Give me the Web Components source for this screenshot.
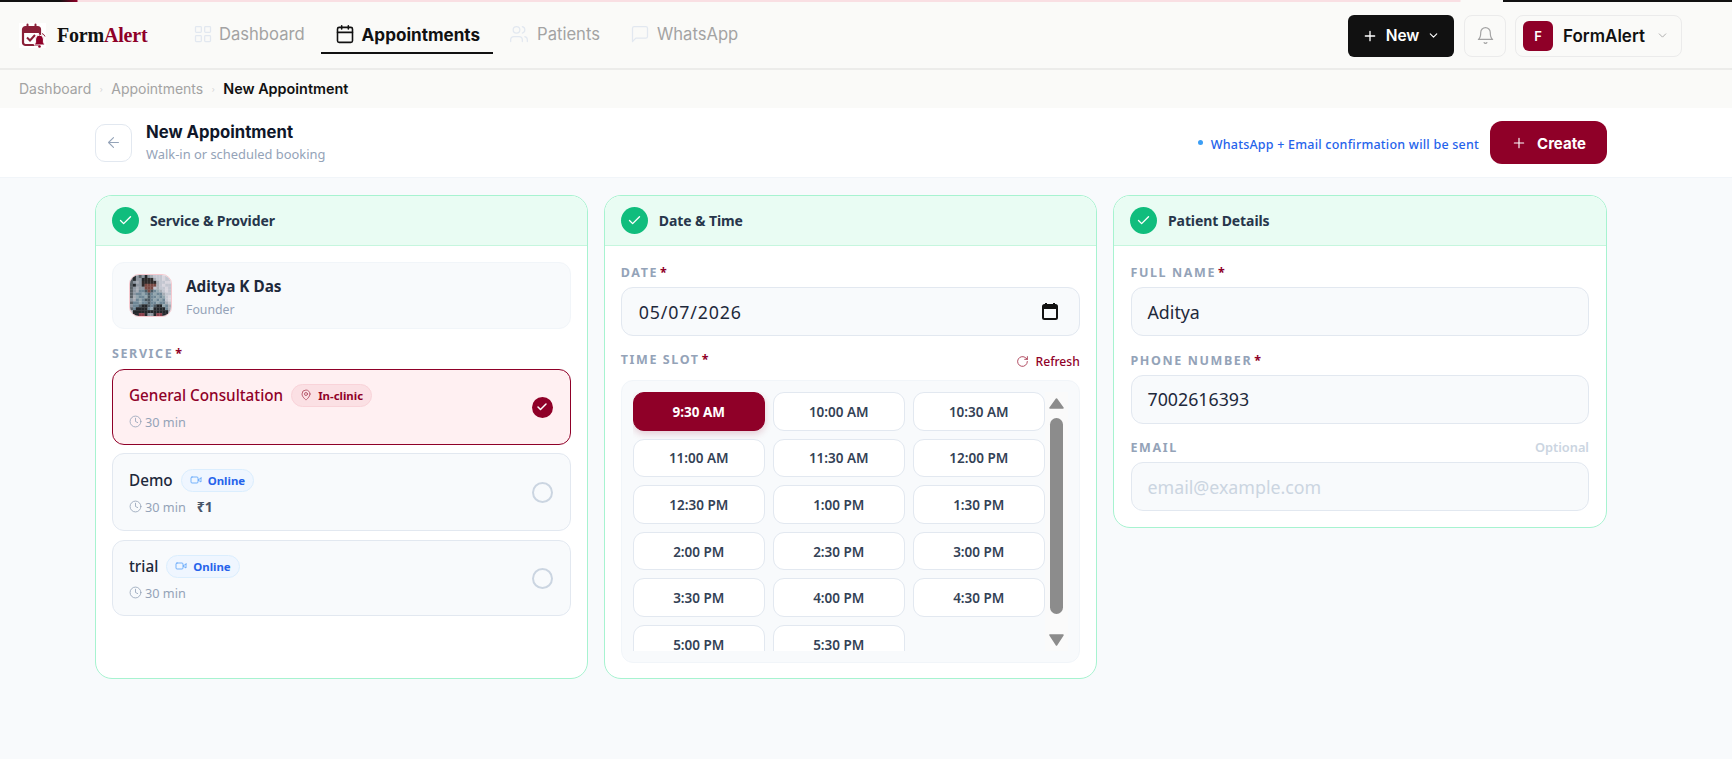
<!DOCTYPE html>
<html lang="en">
<head>
<meta charset="utf-8">
<title>New Appointment</title>
<style>
  html, body { margin: 0; padding: 0; background: #f8fafc; font-family: "Noto Sans", sans-serif; }
  body { height: 759px; overflow: hidden; }
</style>
</head>
<body>
<app-shell>
  <top-bar></top-bar>
  <bread-crumbs></bread-crumbs>
  <page-head></page-head>
  <div slot="cards">
    <step-card heading="Service &amp; Provider" style="height:484px">
      <provider-box name="Aditya K Das" role="Founder"></provider-box>
      <field-label text="Service" required style="margin-top:17px;margin-bottom:7px"></field-label>
      <service-option title="General Consultation" mode="clinic" selected></service-option>
      <service-option title="Demo" mode="online" price="₹1" style="margin-top:8px;height:78px"></service-option>
      <service-option title="trial" mode="online" style="margin-top:9px;height:76px"></service-option>
    </step-card>
    <step-card heading="Date &amp; Time" style="height:484px">
      <form-field label="Date" required value="05/07/2026" spaced calendar style="margin-top:3px"></form-field>
      <div class="slot-head">
        <field-label text="Time Slot" required></field-label>
        <refresh-link></refresh-link>
      </div>
      <time-slots></time-slots>
    </step-card>
    <step-card heading="Patient Details" style="height:333px">
      <form-field label="Full Name" required value="Aditya" style="margin:3px 1px 0 .5px"></form-field>
      <form-field label="Phone Number" required value="7002616393" style="margin:16.5px 1px 0 .5px"></form-field>
      <form-field label="Email" optional placeholder="email@example.com" style="margin:14.5px 1px 0 .5px"></form-field>
    </step-card>
  </div>
</app-shell>

<script>
const svg = (size, body, sw = 2, extra = '') =>
  `<svg width="${size}" height="${size}" viewBox="0 0 24 24" fill="none" stroke="currentColor" stroke-width="${sw}" stroke-linecap="round" stroke-linejoin="round" ${extra}>${body}</svg>`;

const ICONS = {
  grid: '<rect x="3" y="3" width="7" height="7" rx="1"/><rect x="14" y="3" width="7" height="7" rx="1"/><rect x="14" y="14" width="7" height="7" rx="1"/><rect x="3" y="14" width="7" height="7" rx="1"/>',
  calendar: '<path d="M8 2v4M16 2v4"/><rect x="3" y="4" width="18" height="18" rx="2"/><path d="M3 10h18"/>',
  users: '<path d="M16 21v-2a4 4 0 0 0-4-4H6a4 4 0 0 0-4 4v2"/><circle cx="9" cy="7" r="4"/><path d="M22 21v-2a4 4 0 0 0-3-3.87M16 3.13a4 4 0 0 1 0 7.75"/>',
  chat: '<path d="M21 15a2 2 0 0 1-2 2H7l-4 4V5a2 2 0 0 1 2-2h14a2 2 0 0 1 2 2z"/>',
  plus: '<path d="M5 12h14M12 5v14"/>',
  down: '<path d="m6 9 6 6 6-6"/>',
  bell: '<path d="M6 8a6 6 0 0 1 12 0c0 7 3 9 3 9H3s3-2 3-9"/><path d="M10.3 21a1.94 1.94 0 0 0 3.4 0"/>',
  back: '<path d="m12 19-7-7 7-7M19 12H5"/>',
  check: '<path d="M20 6 9 17l-5-5"/>',
  clock: '<circle cx="12" cy="12" r="10"/><path d="M12 6v6l4 2"/>',
  pin: '<path d="M20 10c0 6-8 12-8 12s-8-6-8-12a8 8 0 0 1 16 0Z"/><circle cx="12" cy="10" r="3"/>',
  video: '<path d="m22 8-6 4 6 4V8Z"/><rect x="2" y="6" width="14" height="12" rx="2"/>',
  refresh: '<path d="M21 12a9 9 0 1 1-2.64-6.36L21 8"/><path d="M21 3v5h-5"/>'
};

// the provider photo, as a small mosaic
const PHOTO = [
  'akbabkbgcccdcd',
  'akbbkhhhgccdcc',
  'abgbhhhhhgccdd',
  'akbbhffffgcdcc',
  'abgbbfffcgccdc',
  'abgjjnfnjmgcdc',
  'abjjmjnjmjjgcc',
  'agmjjmnjjmjmcd',
  'bgjmjnnjmjmjcd',
  'ajjmjjnjjmjjgc',
  'bjjnkknjnkkmjg',
  'ajkkkkjmkkkkjg',
  'gkkkkkkkkkkkkb',
  'bkkrrkbbkrrkkg'
];
const PHOTO_COLORS = { a: '#5b6268', b: '#8d96a0', c: '#c3c6d0', d: '#d9d6de', k: '#24272b', h: '#2e2a2a', f: '#7a4a44', j: '#6f8796', m: '#93a6ae', n: '#4c5a63', r: '#8a3f4a', g: '#a8adb5' };

class Base extends HTMLElement {
  constructor() {
    super();
    this.attachShadow({ mode: 'open' });
  }
  connectedCallback() {
    this.shadowRoot.innerHTML = this.render();
  }
}

class AppShell extends Base {
  render() {
    return `<style>
      :host { display: block; width: 1732px; height: 759px; background: #f8fafc; color: #1e293b; }
      .cards { display: grid; grid-template-columns: 492.5px 493px 494px; column-gap: 16.25px; align-items: start; padding: 17px 0 0 95px; }
      ::slotted([slot="cards"]) { display: contents; }
    </style>
    <slot></slot>
    <div class="cards"><slot name="cards"></slot></div>`;
  }
}

class TopBar extends Base {
  render() {
    const tab = (icon, label, cls = '') => `<a class="tab ${cls}">${svg(20, ICONS[icon], cls === 'on' ? 1.9 : 1.5)}<span>${label}</span></a>`;
    return `<style>
      :host { display: flex; position: relative; align-items: center; box-sizing: border-box; height: 70px; padding: 0 50px 0 19px; background: #fafaf8; border-bottom: 2px solid #ececea; font-family: Inter, "Noto Sans", sans-serif; }
      .load { position: absolute; left: 0; right: 0; top: 0; height: 2px; background: linear-gradient(90deg, #111 0 60px, #8f0028 77px, #f9dfe3 78px, #f9dfe3 1460px, #fafaf8 1461px, #fafaf8 1503px, #111 1503px); }
      .logo { display: flex; align-items: center; gap: 11px; width: 159px; margin-top: 3px; }
      .logo b { font: 700 20px "Liberation Serif", serif; color: #111; letter-spacing: -.2px; }
      .logo b i { font-style: normal; color: #8f0028; }
      nav { display: flex; align-items: stretch; height: 40px; }
      .tab { display: flex; align-items: center; gap: 6.500px; padding: 2px 16px 0 14.500px; font-size: 16.600px; color: #a3a3a3; border-bottom: 2px solid transparent; }
      .tab svg { color: #e2e8f0; }
      .tab.on { color: #111; font-size: 17.100px; font-weight: 700; border-bottom-color: #111; padding-right: 13px; }
      .tab.on svg { color: #111; }
      .tab.wide { padding-left: 16px; gap: 8px; }
      .right { margin-left: auto; display: flex; align-items: center; gap: 9px; margin-top: 3px; }
      .new { display: flex; align-items: center; justify-content: center; gap: 8px; box-sizing: border-box; width: 106px; height: 42px; background: #111; color: #fff; border-radius: 6px; font-size: 15.500px; font-weight: 600; margin-right: 1px; }
      .bell { display: flex; align-items: center; justify-content: center; box-sizing: border-box; width: 42px; height: 42px; border: 1px solid #ebebeb; border-radius: 8px; color: #a3a3a3; }
      .user { display: flex; align-items: center; box-sizing: border-box; width: 167px; height: 42px; border: 1px solid #ebebeb; border-radius: 8px; padding-left: 7px; font-size: 17px; font-weight: 600; color: #111; }
      .av { display: flex; align-items: center; justify-content: center; width: 30px; height: 30px; margin-right: 10px; background: #8f0028; color: #fff; border-radius: 6px; font-size: 13px; font-weight: 600; }
      .user svg { margin-left: 11px; color: #a3a3a3; }
    </style>
    <div class="load"></div>
    <div class="logo">
      <svg width="27" height="25" viewBox="0 0 27 25" style="background:#fff">
        <rect x="4" y="4" width="17" height="18" rx="2.500" fill="none" stroke="#8a2038" stroke-width="2.200"/>
        <path d="M4 5h17v5H4z" fill="#8a2038"/>
        <path d="M8.500 1.500v4M16.500 1.500v4" stroke="#8a2038" stroke-width="2" stroke-linecap="round"/>
        <path d="m8 14.500 3 3 5-5.500" fill="none" stroke="#8a2038" stroke-width="2"/>
        <path d="M15 22h11l-1.600-2.500v-3.500a3.900 3.900 0 0 0-7.800 0v3.500z" fill="#8f0028" stroke="#fff" stroke-width="1"/>
        <path d="M23 10.500a5 5 0 0 1 3 3" fill="none" stroke="#8a2038" stroke-width="1"/>
        <circle cx="20.500" cy="23.500" r="1.300" fill="#8f0028"/>
      </svg>
      <b>Form<i>Alert</i></b>
    </div>
    <nav>${tab('grid', 'Dashboard')}${tab('calendar', 'Appointments', 'on')}${tab('users', 'Patients', 'wide')}${tab('chat', 'WhatsApp')}</nav>
    <div class="right">
      <div class="new">${svg(16, ICONS.plus)}<span>New</span>${svg(13, ICONS.down)}</div>
      <div class="bell">${svg(19, ICONS.bell, 1.5)}</div>
      <div class="user"><span class="av">F</span><span>FormAlert</span>${svg(13, ICONS.down, 1.6)}</div>
    </div>`;
  }
}

class BreadCrumbs extends Base {
  render() {
    return `<style>
      :host { display: flex; align-items: center; box-sizing: border-box; height: 38px; padding: 0 19px 1px; background: #fafaf8; font: 14px Inter, sans-serif; color: #a3a3a3; }
      i { font-style: normal; width: 20px; text-align: center; font-size: 8px; color: #d4d4d4; }
      b { font-size: 14.400px; font-weight: 600; color: #111; }
    </style>
    <span>Dashboard</span><i>›</i><span>Appointments</span><i>›</i><b>New Appointment</b>`;
  }
}

class PageHead extends Base {
  render() {
    return `<style>
      :host { display: flex; align-items: center; box-sizing: border-box; height: 70px; padding: 0 125px 0 95px; background: #fff; border-bottom: 1px solid #f1f5f9; }
      .back { display: flex; align-items: center; justify-content: center; box-sizing: border-box; width: 37px; height: 38px; margin-right: 14px; border: 1px solid #e2e8f0; border-radius: 10px; color: #94a3b8; }
      h1 { margin: 0; font: 700 16.700px/22px Inter, sans-serif; color: #0f172a; }
      p { margin: 1px 0 0; font-size: 12.900px; line-height: 20px; color: #94a3b8; }
      .info { display: flex; align-items: center; margin-left: auto; padding-top: 3px; font-size: 12.500px; font-weight: 500; color: #2563eb; letter-spacing: .22px; }
      .info::before { content: ""; width: 5px; height: 5px; margin: -3px 8px 0 0; border-radius: 50%; background: #3b9ef5; }
      .create { display: flex; align-items: center; justify-content: center; gap: 10px; box-sizing: border-box; width: 117px; height: 43px; margin-left: 11px; padding-top: 1px; background: #8f0028; color: #fff; border-radius: 12px; font: 700 15px Inter, sans-serif; }
    </style>
    <div class="back">${svg(17, ICONS.back, 1.5)}</div>
    <div><h1>New Appointment</h1><p>Walk-in or scheduled booking</p></div>
    <div class="info">WhatsApp + Email confirmation will be sent</div>
    <div class="create">${svg(16, ICONS.plus, 1.7)}<span>Create</span></div>`;
  }
}

class StepCard extends Base {
  render() {
    return `<style>
      :host { display: block; box-sizing: border-box; background: #fff; border: 1px solid #a7f3d0; border-radius: 17px; overflow: hidden; }
      header { display: flex; align-items: center; gap: 11px; box-sizing: border-box; height: 50px; padding: 0 16px; background: #e9fcf3; border-bottom: 1px solid #c6f6de; }
      .tick { display: flex; align-items: center; justify-content: center; width: 27px; height: 27px; border-radius: 50%; background: #10bd7d; color: #fff; }
      h2 { margin: 0; font-size: 14px; font-weight: 700; color: #27364b; letter-spacing: -.1px; }
      .body { padding: 16px; }
      ::slotted(.slot-head) { display: flex; justify-content: space-between; align-items: flex-end; margin: 16px 0 12px; }
    </style>
    <header><span class="tick">${svg(15, ICONS.check, 2.2)}</span><h2>${this.getAttribute('heading')}</h2></header>
    <div class="body"><slot></slot></div>`;
  }
}

class ProviderBox extends Base {
  render() {
    const cells = PHOTO.map((row, y) => [...row].map((c, x) =>
      `<rect x="${x * 3}" y="${y * 3}" width="3.200" height="3.200" fill="${PHOTO_COLORS[c]}"/>`).join('')).join('');
    return `<style>
      :host { display: flex; align-items: center; box-sizing: border-box; height: 67px; padding: 0 16px; gap: 14px; background: #f8fafc; border: 1px solid #f1f5f9; border-radius: 12px; }
      .ph { width: 43px; height: 43px; border-radius: 10px; box-sizing: border-box; border: 1px solid #f6c9cf; overflow: hidden; flex: none; }
      .ph svg { display: block; }
      .who { padding-top: 4px; }
      b { display: block; font-size: 15.300px; font-weight: 700; color: #1e293b; line-height: 20px; }
      span { display: block; margin-top: 5px; font-size: 12.300px; color: #94a3b8; line-height: 18px; }
    </style>
    <div class="ph"><svg width="41" height="41" viewBox="0 0 42 42">${cells}</svg></div>
    <div class="who"><b>${this.getAttribute('name')}</b><span>${this.getAttribute('role')}</span></div>`;
  }
}

class FieldLabel extends Base {
  render() {
    return `<style>
      :host { display: block; font-size: 12.500px; line-height: 16px; font-weight: 700; letter-spacing: 1.600px; color: #94a3b8; text-transform: uppercase; }
      i { font-style: normal; color: #8f0028; letter-spacing: 0; margin-left: 2px; }
    </style>${this.getAttribute('text')}${this.hasAttribute('required') ? '<i>*</i>' : ''}`;
  }
}

class FormField extends Base {
  render() {
    const val = this.getAttribute('value');
    const ph = this.getAttribute('placeholder');
    return `<style>
      :host { display: block; }
      .top { display: flex; justify-content: space-between; align-items: baseline; margin-bottom: 6px; }
      .opt { font-size: 12.800px; font-weight: 600; color: #cbd5e1; }
      .box { display: flex; align-items: center; justify-content: space-between; box-sizing: border-box; height: 49px; padding: 0 16px; background: #f8fafc; border: 1px solid #e2e8f0; border-radius: 12px; font-size: 17.800px; color: #1e293b; }
      .spaced { letter-spacing: .85px; margin-left: 1px; }
      .ph { color: #cbd5e1; }
      svg { display: block; margin-right: 5px; }
    </style>
    <div class="top"><field-label text="${this.getAttribute('label')}" ${this.hasAttribute('required') ? 'required' : ''}></field-label>${this.hasAttribute('optional') ? '<span class="opt">Optional</span>' : ''}</div>
    <div class="box"><span class="${this.hasAttribute('spaced') ? 'spaced' : ''} ${ph ? 'ph' : ''}">${val || ph}</span>${this.hasAttribute('calendar') ? `<svg width="16" height="17" viewBox="0 0 16 17"><path d="M4 0v2M12 0v2" stroke="#111" stroke-width="2"/><rect x="1" y="2" width="14" height="14" rx="1.500" fill="none" stroke="#111" stroke-width="2"/><rect x="1" y="2" width="14" height="4" fill="#111"/></svg>` : ''}</div>`;
  }
}

class ServiceOption extends Base {
  render() {
    const sel = this.hasAttribute('selected');
    const clinic = this.getAttribute('mode') === 'clinic';
    const price = this.getAttribute('price');
    return `<style>
      :host { display: flex; align-items: center; box-sizing: border-box; height: 76px; padding: 0 15px 0 16px; background: ${sel ? '#fff0f2' : '#f8fafc'}; border: 1px solid ${sel ? '#8f0028' : '#e2e8f0'}; border-radius: 12px; }
      .main { flex: 1; }
      .row { display: flex; align-items: center; gap: 8px; }
      .name { font-size: 15.250px; font-weight: 500; color: ${sel ? '#8f0028' : '#1e293b'}; }
      .pill { display: flex; align-items: center; gap: 6px; height: 23px; box-sizing: border-box; margin-top: 1px; padding: 0 8px; border-radius: 12px; font-size: 11.400px; font-weight: 700; }
      .clinic { background: #fbe0e4; border: 1px solid #f9d3d9; color: #8f0028; }
      .clinic svg { color: #b04a60; }
      .online { background: #eff6ff; border: 1px solid #dbeefe; color: #2563eb; }
      .online svg { color: #60a5fa; }
      .meta { display: flex; align-items: center; margin-top: 5px; font-size: 12.700px; color: #94a3b8; line-height: 20px; }
      .meta svg { margin-right: 3px; }
      .price { margin-left: 11px; font-size: 14px; font-weight: 700; color: #475569; }
      .radio { display: flex; align-items: center; justify-content: center; box-sizing: border-box; width: 21px; height: 21px; margin-right: 2px; border-radius: 50%; color: #fff; ${sel ? 'background:#8f0028' : 'border: 2px solid #cbd5e1'}; }
    </style>
    <div class="main">
      <div class="row"><span class="name">${this.getAttribute('title')}</span>
        <span class="pill ${clinic ? 'clinic' : 'online'}">${svg(12, clinic ? ICONS.pin : ICONS.video, 1.7)}${clinic ? 'In-clinic' : 'Online'}</span></div>
      <div class="meta">${svg(13, ICONS.clock, 1.5)}<span>30 min</span>${price ? `<span class="price">${price}</span>` : ''}</div>
    </div>
    <span class="radio">${sel ? svg(12, ICONS.check, 3) : ''}</span>`;
  }
}

class RefreshLink extends Base {
  render() {
    return `<style>
      :host { display: flex; align-items: center; gap: 7px; font-size: 12.100px; font-weight: 500; color: #8f0028; margin-bottom: -2px; }
      svg { color: #b04a60; }
    </style>${svg(13, ICONS.refresh, 1.8)}<span>Refresh</span>`;
  }
}

class TimeSlots extends Base {
  render() {
    const times = ['9:30 AM','10:00 AM','10:30 AM','11:00 AM','11:30 AM','12:00 PM','12:30 PM','1:00 PM','1:30 PM','2:00 PM','2:30 PM','3:00 PM','3:30 PM','4:00 PM','4:30 PM','5:00 PM','5:30 PM'];
    return `<style>
      :host { display: flex; align-items: flex-start; box-sizing: border-box; height: 283px; padding: 11px 12px 11px 11px; background: #f8fafc; border: 1px solid #f1f5f9; border-radius: 12px; }
      .list { position: relative; width: 412px; height: 265px; overflow: hidden; flex: none; }
      /* the last row fades under the box padding, the labels stay whole */
      .list::after { content: ""; position: absolute; left: 0; right: 0; top: 259px; bottom: 0; background: #f8fafc; }
      .grid { display: grid; grid-template-columns: repeat(3, 132px); grid-auto-rows: 38.600px; gap: 8px; }
      .t { display: flex; align-items: center; justify-content: center; padding-top: 1px; background: #fff; border: 1px solid #e2e8f0; border-radius: 11px; font-size: 13.500px; font-weight: 600; color: #334155; box-sizing: border-box; }
      .t.on { background: #8f0028; border-color: #8f0028; color: #fff; font-weight: 700; box-shadow: 0 3px 7px rgba(143,0,40,.18); }
      .bar { position: relative; width: 23px; height: 259px; background: #fafafa; flex: none; }
      .thumb { position: absolute; left: 5px; top: 26px; width: 13px; height: 196px; border-radius: 7px; background: #8c8c8c; }
      .bar svg { position: absolute; left: 4px; }
    </style>
    <div class="list"><div class="grid">${times.map((t, i) => `<div class="t ${i === 0 ? 'on' : ''}">${t}</div>`).join('')}</div></div>
    <div class="bar">
      <svg style="top:6px" width="15" height="11" viewBox="0 0 15 11"><path d="M7.500 1 14 10H1z" fill="#8c8c8c" stroke="#8c8c8c" stroke-width="1.500" stroke-linejoin="round"/></svg>
      <div class="thumb"></div>
      <svg style="top:242px" width="15" height="12" viewBox="0 0 15 12"><path d="M1 1h13l-6.500 10z" fill="#8c8c8c" stroke="#8c8c8c" stroke-width="1.500" stroke-linejoin="round"/></svg>
    </div>`;
  }
}

customElements.define('field-label', FieldLabel);
customElements.define('app-shell', AppShell);
customElements.define('top-bar', TopBar);
customElements.define('bread-crumbs', BreadCrumbs);
customElements.define('page-head', PageHead);
customElements.define('step-card', StepCard);
customElements.define('provider-box', ProviderBox);
customElements.define('form-field', FormField);
customElements.define('service-option', ServiceOption);
customElements.define('refresh-link', RefreshLink);
customElements.define('time-slots', TimeSlots);
</script>
</body>
</html>
